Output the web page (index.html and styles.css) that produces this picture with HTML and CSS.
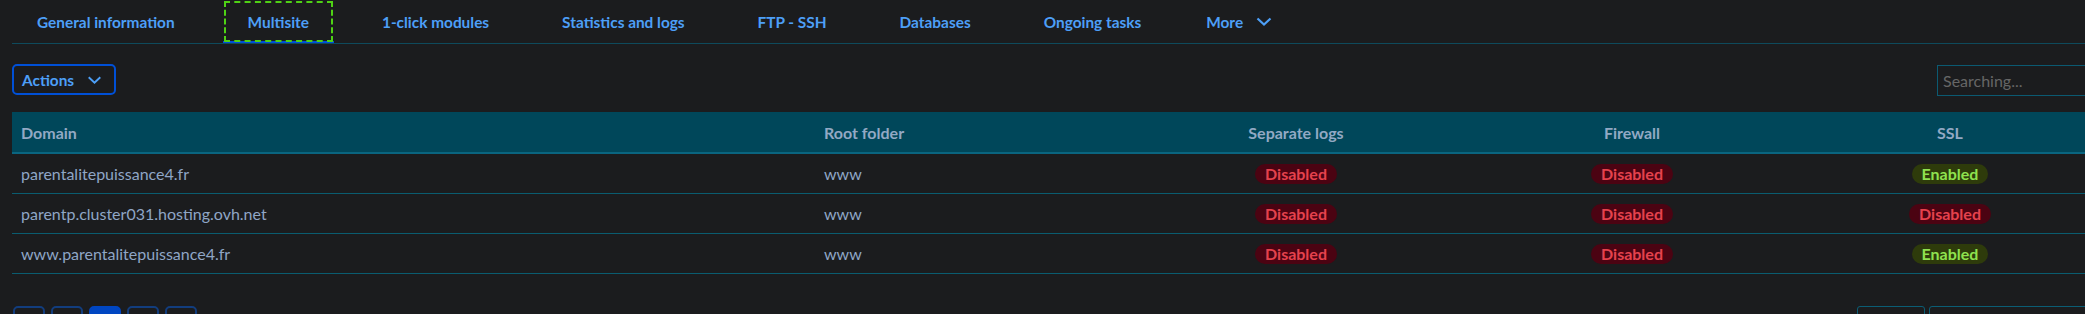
FILE: index.html
```html
<!DOCTYPE html>
<html lang="en">
<head>
<meta charset="utf-8">
<title>Multisite</title>
<link rel="stylesheet" href="styles.css">
</head>
<body>
<div class="page">
  <nav class="tabs">
    <a class="tab">General information</a>
    <a class="tab active">Multisite</a>
    <a class="tab">1-click modules</a>
    <a class="tab">Statistics and logs</a>
    <a class="tab">FTP - SSH</a>
    <a class="tab">Databases</a>
    <a class="tab">Ongoing tasks</a>
    <a class="tab more">More
      <svg class="chev" viewBox="0 0 16 9" width="16" height="9"><polyline points="1.5,1.5 8,7.5 14.5,1.5" fill="none" stroke="currentColor" stroke-width="2.2"/></svg>
    </a>
  </nav>

  <div class="toolbar">
    <button class="actions">Actions
      <svg class="chev" viewBox="0 0 16 9" width="15" height="8"><polyline points="1.5,1.5 8,7.5 14.5,1.5" fill="none" stroke="currentColor" stroke-width="2.2"/></svg>
    </button>
    <input class="search" type="text" placeholder="Searching...">
  </div>

  <table class="sites">
    <colgroup>
      <col class="c-domain"><col class="c-root"><col class="c-logs"><col class="c-fw"><col class="c-ssl">
    </colgroup>
    <thead>
      <tr><th class="left">Domain</th><th class="left">Root folder</th><th>Separate logs</th><th>Firewall</th><th>SSL</th></tr>
    </thead>
    <tbody>
      <tr>
        <td class="left">parentalitepuissance4.fr</td><td class="left">www</td>
        <td><span class="badge off">Disabled</span></td>
        <td><span class="badge off">Disabled</span></td>
        <td><span class="badge on">Enabled</span></td>
      </tr>
      <tr>
        <td class="left">parentp.cluster031.hosting.ovh.net</td><td class="left">www</td>
        <td><span class="badge off">Disabled</span></td>
        <td><span class="badge off">Disabled</span></td>
        <td><span class="badge off">Disabled</span></td>
      </tr>
      <tr>
        <td class="left">www.parentalitepuissance4.fr</td><td class="left">www</td>
        <td><span class="badge off">Disabled</span></td>
        <td><span class="badge off">Disabled</span></td>
        <td><span class="badge on">Enabled</span></td>
      </tr>
    </tbody>
  </table>

  <div class="footer">
    <div class="pager">
      <span class="pg"></span><span class="pg"></span><span class="pg current"></span><span class="pg"></span><span class="pg"></span>
    </div>
    <div class="per-page">
      <span class="box small"></span><span class="box wide"></span>
    </div>
  </div>
</div>
</body>
</html>
```
FILE: styles.css
```css
html, body {
  margin: 0;
  background: #1b1c1e;
  overflow: hidden;
}
body {
  font-family: Lato, "Noto Sans", sans-serif;
  font-size: 16px;
}
.page {
  width: 2178px;
  padding-left: 12px;
}

/* tabs */
.tabs {
  display: flex;
  gap: 23px;
  height: 43px;
  border-bottom: 1px solid #0e4a5c;
}
.tab {
  display: flex;
  align-items: center;
  gap: 13px;
  box-sizing: border-box;
  height: 43px;
  padding: 2px 25px 0;
  border-bottom: 2px solid transparent;
  color: #4d9ff7;
  font-size: 15.4px;
  font-weight: 700;
  text-decoration: none;
  white-space: nowrap;
}
.tab.more { padding-left: 17px; }
.tab.active {
  border-bottom-color: #0050d7;
  outline: 2px dashed #4fd215;
  outline-offset: -3px;
}
.chev { display: block; }

/* toolbar */
.toolbar {
  display: flex;
  justify-content: space-between;
  align-items: flex-start;
  margin-top: 20px;
  height: 31px;
}
.actions {
  display: flex;
  align-items: center;
  gap: 13px;
  box-sizing: border-box;
  height: 31px;
  padding: 0 12px 0 8px;
  border: 2px solid #0050d7;
  border-radius: 5px;
  background: transparent;
  color: #4d9ff7;
  font-family: inherit;
  font-size: 15.4px;
  font-weight: 700;
}
.search {
  box-sizing: border-box;
  width: 253px;
  height: 31px;
  margin-top: 1px;
  padding: 0 5px;
  border: 1px solid #0b5a72;
  background: transparent;
  color: #aaa;
  font-family: inherit;
  font-size: 16px;
}
.search::placeholder { color: #666; }

/* table */
.sites {
  margin-top: 17px;
  width: 2178px;
  table-layout: fixed;
  border-collapse: separate;
  border-spacing: 0;
}
.c-domain { width: 803px; }
.c-root { width: 223px; }
.c-logs { width: 516px; }
.c-fw { width: 156px; }
.c-ssl { width: 480px; }

.sites th {
  height: 40px;
  padding: 0;
  background: #00475a;
  border-bottom: 2px solid #0a6580;
  color: #92a9c4;
  font-weight: 700;
  text-align: center;
}
.sites td {
  height: 39px;
  padding: 0;
  border-bottom: 1px solid #0a5c70;
  color: #8fa6c6;
  text-align: center;
}
.sites .left {
  text-align: left;
  padding-left: 9px;
}

.badge {
  display: inline-block;
  height: 20px;
  line-height: 20px;
  padding: 0 10px;
  border-radius: 10px;
  font-weight: 700;
}
.badge.off { background: #4b0312; color: #e5424d; }
.badge.on { background: #2e3b0b; color: #8fe24f; }

/* footer */
.footer {
  display: flex;
  justify-content: space-between;
  margin-top: 32px;
}
.pager {
  display: flex;
  gap: 6px;
  margin-left: 1px;
}
.pg {
  box-sizing: border-box;
  width: 32px;
  height: 32px;
  border: 2px solid #123d7e;
  border-radius: 5px;
}
.pg.current {
  background: #0046c2;
  border-color: #0046c2;
}
.per-page {
  display: flex;
  gap: 4px;
}
.box {
  box-sizing: border-box;
  height: 32px;
  border: 1px solid #0b5d75;
  border-radius: 3px;
}
.box.small { width: 68px; }
.box.wide { width: 261px; }
```
